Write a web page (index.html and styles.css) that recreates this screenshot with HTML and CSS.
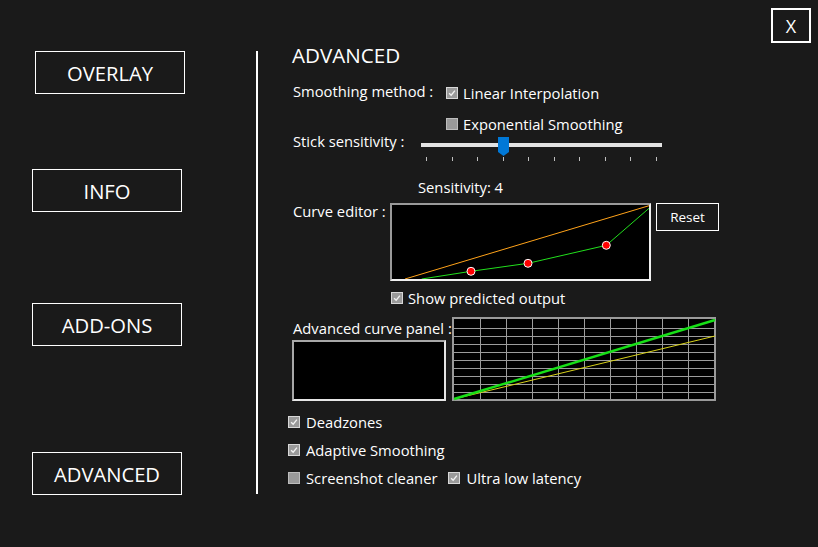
FILE: index.html
```html
<!DOCTYPE html>
<html>
<head>
<meta charset="utf-8">
<link rel="stylesheet" href="styles.css">
</head>
<body>
<div class="page">
  <nav class="side">
    <div class="navbtn nav-overlay">OVERLAY</div>
    <div class="navbtn nav-info">INFO</div>
    <div class="navbtn nav-addons">ADD-ONS</div>
    <div class="navbtn nav-adv">ADVANCED</div>
  </nav>
  <div class="divider"></div>
  <main class="panel">
    <h1 class="title">ADVANCED</h1>
    <div class="row row-smooth">
      <div class="label label-smooth">Smoothing method :</div>
      <label class="check"><span class="box on"><svg viewBox="0 0 12 12"><path d="M2.5 6.2 L5 8.7 L9.5 3.2"/></svg></span>Linear Interpolation</label>
    </div>
    <div class="row row-exp">
      <label class="check"><span class="box"></span>Exponential Smoothing</label>
    </div>
    <div class="row row-stick">
      <div class="label label-stick">Stick sensitivity :</div>
      <div class="slider">
        <div class="track"></div>
        <svg class="thumb" viewBox="0 0 11 19"><polygon points="0,0 11,0 11,15 5.5,19 0,15"/></svg>
        <div class="ticks"><i></i><i></i><i></i><i></i><i></i><i></i><i></i><i></i><i></i><i></i></div>
      </div>
    </div>
    <div class="row row-sens">Sensitivity: 4</div>
    <div class="row row-curve">
      <div class="label label-curve">Curve editor :</div>
      <div class="curvebox">
        <svg viewBox="0 0 257 74" width="257" height="74">
          <polyline class="orange" points="13,74 257,0.7"/>
          <polyline class="green" points="29.7,74 79,66.3 136,58.3 214.3,40.3 257,3.3"/>
          <circle class="dot" cx="79" cy="66.3" r="4"/>
          <circle class="dot" cx="136" cy="58.3" r="4"/>
          <circle class="dot" cx="214.3" cy="40.3" r="4"/>
        </svg>
      </div>
      <div class="reset">Reset</div>
    </div>
    <div class="row row-show">
      <label class="check"><span class="box on"><svg viewBox="0 0 12 12"><path d="M2.5 6.2 L5 8.7 L9.5 3.2"/></svg></span>Show predicted output</label>
    </div>
    <div class="row row-adv">
      <div class="advleft">
        <div class="label label-adv">Advanced curve panel :</div>
        <div class="blackbox"></div>
      </div>
      <svg class="grid" viewBox="0 0 264 84" width="264" height="84">
        <rect x="0" y="0" width="264" height="84" fill="#000"/>
        <g class="gl">
          <line x1="28.5" y1="0" x2="28.5" y2="84"/>
          <line x1="54.5" y1="0" x2="54.5" y2="84"/>
          <line x1="80.5" y1="0" x2="80.5" y2="84"/>
          <line x1="106.5" y1="0" x2="106.5" y2="84"/>
          <line x1="132.5" y1="0" x2="132.5" y2="84"/>
          <line x1="158.5" y1="0" x2="158.5" y2="84"/>
          <line x1="184.5" y1="0" x2="184.5" y2="84"/>
          <line x1="210.5" y1="0" x2="210.5" y2="84"/>
          <line x1="236.5" y1="0" x2="236.5" y2="84"/>
          <line x1="0" y1="11.5" x2="264" y2="11.5"/>
          <line x1="0" y1="19.5" x2="264" y2="19.5"/>
          <line x1="0" y1="27.5" x2="264" y2="27.5"/>
          <line x1="0" y1="35.5" x2="264" y2="35.5"/>
          <line x1="0" y1="43.5" x2="264" y2="43.5"/>
          <line x1="0" y1="51.5" x2="264" y2="51.5"/>
          <line x1="0" y1="59.5" x2="264" y2="59.5"/>
          <line x1="0" y1="67.5" x2="264" y2="67.5"/>
          <line x1="0" y1="75.5" x2="264" y2="75.5"/>
        </g>
        <rect class="gborder" x="1" y="1" width="262" height="82"/>
        <line class="yline" x1="2" y1="82" x2="263" y2="19"/>
        <line class="gline" x1="2" y1="82" x2="263" y2="3"/>
      </svg>
    </div>
    <div class="row row-dead">
      <label class="check"><span class="box on"><svg viewBox="0 0 12 12"><path d="M2.5 6.2 L5 8.7 L9.5 3.2"/></svg></span>Deadzones</label>
    </div>
    <div class="row row-adapt">
      <label class="check"><span class="box on"><svg viewBox="0 0 12 12"><path d="M2.5 6.2 L5 8.7 L9.5 3.2"/></svg></span>Adaptive Smoothing</label>
    </div>
    <div class="row row-last">
      <label class="check"><span class="box"></span>Screenshot cleaner</label>
      <label class="check check-ultra"><span class="box on"><svg viewBox="0 0 12 12"><path d="M2.5 6.2 L5 8.7 L9.5 3.2"/></svg></span>Ultra low latency</label>
    </div>
  </main>
  <div class="close">X</div>
</div>
</body>
</html>
```

FILE: styles.css
```css
html, body {
  margin: 0;
  padding: 0;
  background: #1a1a1a;
}
body {
  width: 818px;
  height: 547px;
  overflow: hidden;
  color: #ffffff;
  font-family: "Open Sans", "Noto Sans", sans-serif;
  font-size: 14.75px;
}
.page {
  position: relative;
  display: flex;
  width: 818px;
  height: 547px;
}
.side {
  width: 256px;
  display: flex;
  flex-direction: column;
}
.navbtn {
  width: 148px;
  height: 41px;
  border: 1px solid #ffffff;
  display: flex;
  align-items: center;
  justify-content: center;
  font-size: 20.2px;
  margin-left: 32px;
}
.nav-overlay { margin-top: 51px; margin-left: 35px; }
.nav-info { margin-top: 75px; }
.nav-addons { margin-top: 91px; }
.nav-adv { margin-top: 106px; }
.divider {
  width: 2px;
  height: 443px;
  margin-top: 51px;
  background: #ffffff;
}
.panel {
  margin-left: 34px;
  display: flex;
  flex-direction: column;
}
.title {
  margin: 40px 0 0 0;
  height: 30px;
  line-height: 30px;
  font-size: 20.6px;
  font-weight: normal;
}
.row {
  display: flex;
  align-items: center;
  height: 20px;
  line-height: 20px;
}
.label { white-space: nowrap; padding-left: 1px; }
.check {
  display: flex;
  align-items: center;
  gap: 5px;
  white-space: nowrap;
}
.box {
  width: 10px;
  height: 10px;
  border: 1px solid #bdbdbd;
  background: #9a9a9a;
  display: flex;
  flex: none;
}
.box.on { border-color: #d8d8d8; background: #9a9a9a; }
.box svg { width: 10px; height: 10px; }
.box path { fill: none; stroke: #f2f2f2; stroke-width: 1.6; }
.row-smooth { margin-top: 13px; }
.label-smooth { width: 153px; flex: none; margin-top: -4px; }
.row-exp { margin-top: 11px; margin-left: 154px; }
.row-stick {
  margin-top: 3px;
  height: 25px;
  align-items: flex-start;
}
.label-stick { width: 128px; flex: none; margin-top: -6px; }
.slider {
  position: relative;
  width: 241px;
  height: 25px;
  flex: none;
}
.track {
  margin-top: 6px;
  height: 4px;
  background: #e3e3e3;
}
.thumb {
  position: absolute;
  left: 77px;
  top: 0;
  width: 11px;
  height: 19px;
}
.thumb polygon { fill: #0078d7; }
.ticks {
  margin-top: 10px;
  display: flex;
  justify-content: space-between;
  padding: 0 5px 0 5px;
}
.ticks i {
  display: block;
  width: 1px;
  height: 4px;
  background: #bfbfbf;
}
.row-sens { margin-top: 15px; margin-left: 126px; }
.row-curve {
  margin-top: 6px;
  height: 78px;
  align-items: flex-start;
}
.label-curve { width: 97px; flex: none; margin-top: -2px; }
.curvebox {
  width: 257px;
  height: 74px;
  background: #000;
  border: 2px solid;
  border-color: #9a9a9a #f0f0f0 #f0f0f0 #9a9a9a;
  flex: none;
}
.curvebox svg { display: block; }
.orange { fill: none; stroke: #ffa31a; stroke-width: 1; }
.green { fill: none; stroke: #22e01d; stroke-width: 1; }
.dot { fill: #ff0000; stroke: #ffffff; stroke-width: 1; }
.reset {
  margin-left: 5px;
  width: 61px;
  height: 26px;
  border: 1px solid #ffffff;
  display: flex;
  align-items: center;
  justify-content: center;
  font-size: 13.5px;
  flex: none;
}
.row-show { margin-top: 7px; margin-left: 99px; }
.row-adv {
  margin-top: 9px;
  height: 84px;
  align-items: flex-start;
  gap: 6px;
}
.advleft { display: flex; flex-direction: column; width: 154px; flex: none; }
.label-adv { height: 20px; line-height: 20px; margin-top: 1px; }
.blackbox {
  margin-top: 2px;
  width: 150px;
  height: 57px;
  background: #000;
  border: 2px solid;
  border-color: #a8a8a8 #e6e6e6 #e6e6e6 #a8a8a8;
}
.grid { display: block; flex: none; }
.gl line { stroke: #9c9c9c; stroke-width: 1; }
.gborder { fill: none; stroke: #9a9a9a; stroke-width: 2; }
.yline { stroke: #d8d21a; stroke-width: 1; }
.gline { stroke: #17e017; stroke-width: 2.4; }
.row-dead { margin-top: 11px; margin-left: -4px; }
.row-dead .check, .row-adapt .check, .row-last .check { gap: 6px; }
.row-adapt { margin-top: 8px; margin-left: -4px; }
.row-last { margin-top: 8px; margin-left: -4px; }
.check-ultra { margin-left: 11px; }
.close {
  position: absolute;
  left: 771px;
  top: 8px;
  width: 36px;
  height: 31px;
  border: 2px solid #ffffff;
  display: flex;
  align-items: center;
  justify-content: center;
  font-size: 18px;
}
```
